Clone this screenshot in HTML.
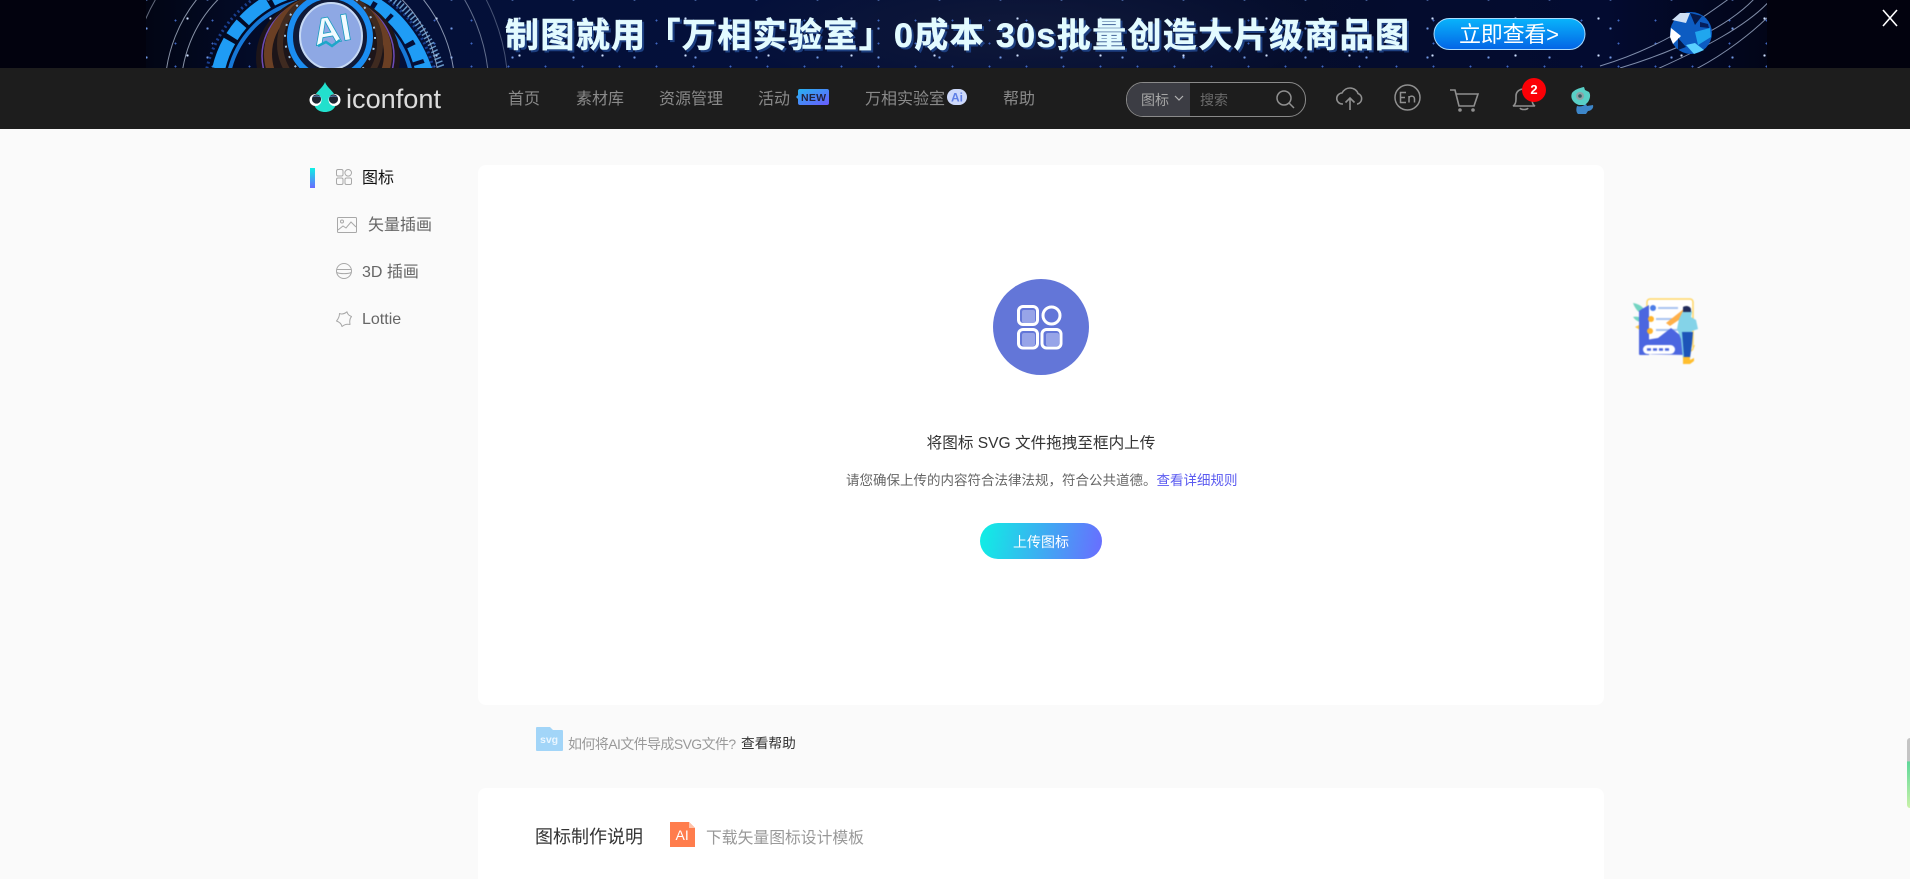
<!DOCTYPE html>
<html lang="zh-CN">
<head>
<meta charset="utf-8">
<title>iconfont</title>
<style>
html,body{margin:0;padding:0;width:1910px;height:879px;overflow:hidden;background:#fafafa}
body{position:relative;font-family:"Liberation Sans","Noto Sans CJK SC",sans-serif}
.a{position:absolute;white-space:nowrap;line-height:1}
.nav{color:#8a8a8a;font-size:16px;top:92px}
svg{position:absolute;overflow:visible}
#banner{position:absolute;left:0;top:0;width:1910px;height:68px;background:#02020e;overflow:hidden}
#art{position:absolute;left:146px;top:0;width:1621px;height:68px;overflow:hidden;
background:
radial-gradient(circle,#cfe0ff 0 1px,transparent 1.3px) 0 0/83px 37px,
radial-gradient(circle,#6f95e0 0 1px,transparent 1.3px) 31px 14px/61px 29px,
radial-gradient(circle,#3f66c0 0 .8px,transparent 1.1px) 11px 9px/37px 23px,
radial-gradient(ellipse 300px 70px at 880px 30px,#10193a 0,transparent 100%),
linear-gradient(90deg,#020514 0,#041038 12%,#04103a 40%,#050d2c 70%,#030b30 90%,#020518 100%)}
</style>
</head>
<body>
<div id="banner">
  <div id="art"></div>
  <svg style="left:0;top:0" width="1910" height="68" viewBox="0 0 1910 68">
    <defs>
      <clipPath id="ac"><rect x="146" y="0" width="1621" height="68"/></clipPath>
      <linearGradient id="bb" x1="0" y1="0" x2="0" y2="1"><stop offset="0" stop-color="#09b4fb"/><stop offset="1" stop-color="#0364e6"/></linearGradient>
    </defs>
    <g clip-path="url(#ac)">
    <g fill="none" stroke="#c2cee2">
      <circle cx="310" cy="90" r="129" opacity=".7"/>
      <circle cx="310" cy="90" r="145" opacity=".7"/>
      <circle cx="310" cy="90" r="179" opacity=".5"/>
      <circle cx="310" cy="90" r="198" opacity=".35"/>
    </g>
    <g fill="none">
      <circle cx="320" cy="94" r="116" stroke="#1a3f8f" stroke-width="3" stroke-dasharray="2 3"/>
      <circle cx="320" cy="92" r="104" stroke="#1f9cf5" stroke-width="13" stroke-dasharray="16 4 30 5"/>
      <circle cx="320" cy="92" r="93" stroke="#1678d8" stroke-width="4"/>
      <ellipse cx="328" cy="58" rx="72" ry="64" fill="#1d1519"/>
      <ellipse cx="328" cy="56" rx="66" ry="60" stroke="#6d4bb8" stroke-width="1.500"/>
      <ellipse cx="328" cy="54" rx="60" ry="56" stroke="#6b3f24" stroke-width="8"/>
      <ellipse cx="330" cy="44" rx="50" ry="50" stroke="#3f2a20" stroke-width="6"/>
      <ellipse cx="330" cy="37" rx="40" ry="41" stroke="#1b8df2" stroke-width="6" fill="#101a38"/>
      <ellipse cx="330" cy="37" rx="45" ry="46" stroke="#9fc6e8" stroke-width="2" stroke-dasharray="2 9"/>
      <ellipse cx="331" cy="36" rx="31" ry="33" fill="#8ea8e4" stroke="#c6d9f5" stroke-width="2"/>
      <path d="M373-2C400 12 420 40 430 70" stroke="#1f9cf5" stroke-width="5"/>
      <path d="M392-2C415 15 432 40 442 70" stroke="#7fb6e6" stroke-width="7" stroke-dasharray="1.500 2.500" opacity=".8"/>
    </g>
    <text x="313" y="43" font-family="Liberation Sans" font-size="38" font-weight="700" fill="#f2fbff" stroke="#1a9cc0" stroke-width=".8" transform="rotate(-10 330 30)">AI</text>
    <path d="M318 46l8-4 6 4 8-6" fill="none" stroke="#1da7c9" stroke-width="2.500"/>
    <g fill="none" stroke="#b4c5e2" stroke-width="1" opacity=".7">
      <path d="M1600 66C1660 48 1700 20 1730-2"/>
      <path d="M1620 68C1680 50 1730 25 1755-2"/>
      <path d="M1655 70C1700 50 1750 25 1772-2"/>
      <path d="M1690 72C1725 55 1755 30 1770 15"/>
    </g>
    <g>
      <circle cx="1691" cy="33" r="21" fill="#0d5cc2"/>
      <path d="M1672 20l8-7 10 0-4 10z" fill="#cfe0f5"/>
      <path d="M1671 28l10 8-8 8-3-7z" fill="#fff"/>
      <path d="M1690 13l12 3-7 9z" fill="#06194a"/>
      <path d="M1695 32l15-4 1 9-13 8z" fill="#20a6ee"/>
      <path d="M1686 45l8 9 10-4-9-7z" fill="#5ad0ff"/>
      <path d="M1678 38l8 9-8 3z" fill="#041a4c"/>
      <path d="M1700 22l8 2 1 4-9-1z" fill="#061f5c"/>
    </g>
    </g>
    <text x="505" y="47" font-family="Liberation Sans,Noto Sans CJK SC,sans-serif" font-size="34" font-weight="700" fill="#1d3f80" stroke="#1d3f80" stroke-width=".6" textLength="904" lengthAdjust="spacing" transform="translate(2 2)">制图就用「万相实验室」0成本 30s批量创造大片级商品图</text>
    <text x="505" y="47" font-family="Liberation Sans,Noto Sans CJK SC,sans-serif" font-size="34" font-weight="700" fill="#e3fbff" stroke="#e3fbff" stroke-width=".5" textLength="904" lengthAdjust="spacing">制图就用「万相实验室」0成本 30s批量创造大片级商品图</text>
    <rect x="1434" y="18.500" width="151" height="31" rx="15.500" fill="url(#bb)" stroke="#a9dcff" stroke-width="1"/>
    <text x="1459" y="42" font-family="Liberation Sans,Noto Sans CJK SC,sans-serif" font-size="22" fill="#fff" textLength="100" lengthAdjust="spacing">立即查看&gt;</text>
    <path d="M1883 10l14 16M1897 10l-14 16" stroke="#fff" stroke-width="1.600" fill="none"/>
  </svg>
</div>

<div class="a" style="left:0;top:68px;width:1910px;height:61px;background:#1d1d1d"></div>

<!-- logo -->
<svg style="left:309px;top:82px" width="32" height="31" viewBox="0 0 32 31">
  <path d="M16 0C18 6 25 9 27 16C29 25 23 30 16 30C9 30 3 25 5 16C7 9 14 6 16 0Z" fill="#22e0cd"/>
  <circle cx="6.500" cy="18" r="6" fill="#fff"/><circle cx="25.500" cy="18" r="6" fill="#fff"/>
  <circle cx="7.500" cy="17" r="4.600" fill="#1d2430"/><circle cx="24.500" cy="17" r="4.600" fill="#1d2430"/>
  <path d="M13.500 16c-3-3-8-3-10-1 3-1 7-1 10 1zM18.500 16c3-3 8-3 10-1-3-1-7-1-10 1z" fill="#7fb8ff"/>
</svg>
<svg style="left:346px;top:84px" width="100" height="30"><text x="0" y="24" font-family="Liberation Sans" font-size="27" fill="#dcdcdc" textLength="95" lengthAdjust="spacingAndGlyphs">iconfont</text></svg>

<div class="a nav" style="left:508px">首页</div>
<div class="a nav" style="left:576px">素材库</div>
<div class="a nav" style="left:659px">资源管理</div>
<div class="a nav" style="left:758px">活动</div>
<svg style="left:796px;top:89px" width="34" height="17" viewBox="0 0 34 17">
  <defs><linearGradient id="nw" x1="0" y1="0" x2="1" y2="1"><stop offset="0" stop-color="#25b5f0"/><stop offset="1" stop-color="#6a5cff"/></linearGradient></defs>
  <path d="M4 0h27a2 2 0 0 1 2 2v12a2 2 0 0 1-2 2H4a2 2 0 0 1-2-2v-4L0 8l2-2V2a2 2 0 0 1 2-2z" fill="url(#nw)"/>
  <text x="5" y="12" font-family="Liberation Sans" font-size="10.500" font-weight="700" fill="#23233f" textLength="25">NEW</text>
</svg>
<div class="a nav" style="left:865px">万相实验室</div>
<svg style="left:947px;top:89px" width="20" height="16" viewBox="0 0 20 16">
  <rect width="20" height="16" rx="8" fill="#cdd9fb"/>
  <text x="4" y="12.500" font-family="Liberation Sans" font-size="12" font-weight="700" fill="#5f7fe6">Ai</text>
</svg>
<div class="a nav" style="left:1003px">帮助</div>

<!-- search -->
<div class="a" style="left:1126px;top:82px;width:178px;height:33px;border:1px solid #8a8a8a;border-radius:17px;overflow:hidden">
  <div class="a" style="left:0;top:0;width:63px;height:33px;background:#3c3d44"></div>
</div>
<div class="a" style="left:1141px;top:93px;font-size:14px;color:#a6a6a6">图标</div>
<svg style="left:1174px;top:95px" width="10" height="7"><path d="M1 1l4 4 4-4" fill="none" stroke="#b4b4b4" stroke-width="1.200"/></svg>
<div class="a" style="left:1200px;top:93px;font-size:14px;color:#6b6b6b">搜索</div>
<svg style="left:1276px;top:90px" width="19" height="18" viewBox="0 0 19 18"><circle cx="8" cy="8" r="7" fill="none" stroke="#909090" stroke-width="1.500"/><path d="M13 13l5 5" stroke="#909090" stroke-width="1.500"/></svg>

<!-- nav icons -->
<svg style="left:1336px;top:87px" width="28" height="24" viewBox="0 0 28 24" fill="none" stroke="#8f8f8f" stroke-width="1.600">
  <path d="M7 17H6.500a5.500 5.500 0 0 1-.5-11C8 2.500 11 1 14 1c4 0 7 2.500 8 5.500a5.500 5.500 0 0 1-.5 10.500H21"/>
  <path d="M14 23V11M9.500 15.500L14 11l4.500 4.500"/>
</svg>
<svg style="left:1394px;top:84px" width="27" height="27" viewBox="0 0 27 27" fill="none" stroke="#8f8f8f" stroke-width="1.500">
  <circle cx="13.500" cy="13.500" r="12.500"/>
  <path d="M12 8.500H6.500v10H12M6.500 13.500H11M15 18.500V12M15 14.500c0-3 5.500-3.500 5.500.5v3.500"/>
</svg>
<svg style="left:1450px;top:89px" width="30" height="23" viewBox="0 0 30 23" fill="none" stroke="#8f8f8f" stroke-width="1.600">
  <path d="M0 1h5l4 16h15l4-12H6"/>
  <circle cx="10" cy="21" r="1" fill="#8f8f8f"/><circle cx="23" cy="21" r="1" fill="#8f8f8f"/>
</svg>
<svg style="left:1512px;top:87px" width="24" height="24" viewBox="0 0 24 24" fill="none" stroke="#8f8f8f" stroke-width="1.600">
  <path d="M1 19c2-1 3-3 3-7V9c0-4 3-7 8-7s8 3 8 7v3c0 4 1 6 3 7z"/>
  <path d="M8 21c1 2 7 2 8 0"/>
</svg>
<div class="a" style="left:1522px;top:78px;width:24px;height:24px;border-radius:12px;background:#fb0006;color:#fff;font-size:13px;line-height:24px;text-align:center;font-weight:700">2</div>
<svg style="left:1570px;top:87px" width="24" height="27" viewBox="0 0 24 27">
  <path d="M14 0l1 3 4 2c2 3 1 7-1 10l-3 3H9C3 16 0 11 2 6c2-3 7-5 12-6z" fill="#59cfc6"/>
  <circle cx="10" cy="9" r="4" fill="#8ea2a6"/><circle cx="10" cy="9" r="1.800" fill="#2e5c60"/>
  <path d="M7 19c3 1 7 0 9-2l1 2 6-1c1 3-2 6-5 6l-2 3H8c-2-2-2-5-1-8z" fill="#3d86c9"/>
</svg>

<!-- sidebar -->
<div class="a" style="left:310px;top:168px;width:5px;height:20px;background:linear-gradient(180deg,#0ff0e4,#6a6aff)"></div>
<svg style="left:336px;top:169px" width="16" height="16" viewBox="0 0 16 16" fill="none" stroke="#a8a8a8" stroke-width="1">
  <rect x=".5" y=".5" width="6.500" height="6.500" rx="1.500"/><circle cx="12.200" cy="3.800" r="3.300"/>
  <rect x=".5" y="9" width="6.500" height="6.500" rx="1.500"/><rect x="9" y="9" width="6.500" height="6.500" rx="1.500"/>
</svg>
<div class="a" style="left:362px;top:171px;font-size:16px;color:#111">图标</div>
<svg style="left:337px;top:217px" width="20" height="16" viewBox="0 0 20 16" fill="none" stroke="#a8a8a8" stroke-width="1">
  <rect x=".5" y=".5" width="19" height="15" rx="1"/><circle cx="5" cy="4.500" r="1.500"/>
  <path d="M1 13l5-4 3 2 5-6 5 5"/>
</svg>
<div class="a" style="left:368px;top:218px;font-size:16px;color:#666">矢量插画</div>
<svg style="left:336px;top:263px" width="16" height="16" viewBox="0 0 16 16" fill="none" stroke="#a8a8a8" stroke-width="1">
  <circle cx="8" cy="8" r="7.500"/><path d="M.5 6.500h15M.5 9.500c4 1.500 11 1.500 15 0"/>
</svg>
<div class="a" style="left:362px;top:265px;font-size:16px;color:#666">3D 插画</div>
<svg style="left:336px;top:311px" width="16" height="16" viewBox="0 0 16 16" fill="none" stroke="#a8a8a8" stroke-width="1" stroke-linejoin="round">
  <path d="M3.500 2.500Q7 4 11 .8Q11.500 4 15.500 5.500Q13 8.500 14 13.500Q9.500 12.500 6 15.500Q5 11.500 .5 10Q3.500 6.500 3.500 2.500Z"/>
</svg>
<div class="a" style="left:362px;top:312px;font-size:16px;color:#666">Lottie</div>

<!-- main panel -->
<div class="a" style="left:478px;top:165px;width:1126px;height:540px;background:#fff;border-radius:8px"></div>
<svg style="left:993px;top:279px" width="96" height="96" viewBox="0 0 96 96">
  <circle cx="48" cy="48" r="48" fill="#6376d8"/>
  <g fill="#97a4e8"><rect x="29" y="31" width="13" height="13" rx="2"/><rect x="29" y="54" width="13" height="13" rx="2"/><rect x="53" y="54" width="13" height="13" rx="2"/></g>
  <g fill="none" stroke="#fff" stroke-width="3">
    <rect x="25.500" y="27.500" width="19" height="18" rx="4.500"/><circle cx="58.500" cy="36.500" r="8.500"/>
    <rect x="25.500" y="50.500" width="19" height="18.500" rx="4.500"/><rect x="49" y="50.500" width="19" height="18.500" rx="4.500"/>
  </g>
</svg>
<div class="a" style="left:920px;top:436px;font-size:15.600px;color:#333;width:242px;text-align:center">将图标 SVG 文件拖拽至框内上传</div>
<div class="a" style="left:846px;top:474px;font-size:13.500px;color:#666">请您确保上传的内容符合法律法规，符合公共道德。<span style="color:#5b5bf0">查看详细规则</span></div>
<div class="a" style="left:980px;top:523px;width:122px;height:36px;border-radius:18px;background:linear-gradient(100deg,#0ef0e4,#6a6cff);color:#fff;font-size:14px;line-height:38px;text-align:center">上传图标</div>

<!-- help row -->
<svg style="left:536px;top:727px" width="27" height="24" viewBox="0 0 27 24">
  <path d="M0 1a1 1 0 0 1 1-1h13l3 3h9a1 1 0 0 1 1 1v19a1 1 0 0 1-1 1H1a1 1 0 0 1-1-1z" fill="#a2d5f8"/>
  <text x="4" y="16" font-family="Liberation Sans" font-size="10.500" font-weight="700" fill="#eaf6ff">svg</text>
</svg>
<div class="a" style="left:568px;top:737px;font-size:14px;color:#999;letter-spacing:-.6px">如何将AI文件导成SVG文件?</div>
<div class="a" style="left:741px;top:737px;font-size:13.700px;color:#333">查看帮助</div>

<!-- second panel -->
<div class="a" style="left:478px;top:788px;width:1126px;height:120px;background:#fff;border-radius:8px 8px 0 0"></div>
<div class="a" style="left:535px;top:828px;font-size:18px;color:#333">图标制作说明</div>
<svg style="left:670px;top:822px" width="25" height="25" viewBox="0 0 25 25">
  <path d="M0 0h19l6 6v19H0z" fill="#ff7d4d"/><path d="M19 0l6 6h-6z" fill="#ffc3aa"/>
  <text x="5.500" y="18" font-family="Liberation Sans" font-size="14" fill="#fff">AI</text>
</svg>
<div class="a" style="left:706px;top:831px;font-size:15.800px;color:#999">下载矢量图标设计模板</div>

<!-- floating illustration -->
<svg style="left:1633px;top:297px;filter:blur(.5px)" width="68" height="68" viewBox="0 0 68 68">
  <path d="M0 6c7 1 12 5 14 12-6 0-11-4-14-12zM0 20c4-1 9 0 12 5-5 1-9-1-12-5z" fill="#73d4c2"/>
  <path d="M2 30l6-3-1 6zM57 50l5-2-2 5z" fill="#ffcb4a"/>
  <rect x="14" y="2" width="46" height="52" rx="3" fill="#fff" stroke="#ffd666" stroke-width="1.500"/>
  <path d="M9 12l7-4v50H7a1 1 0 0 1-1-1V14z" fill="#4b66e0"/>
  <circle cx="20" cy="11" r="3" fill="#4b7de8"/><circle cx="18" cy="22" r="3" fill="#ffb52e"/><circle cx="17" cy="34" r="3" fill="#ffb52e"/>
  <path d="M25 11h20M23 22h18M23 33h28" stroke="#a9c4f0" stroke-width="2"/>
  <path d="M33 26L52 11l4 5-19 13z" fill="#ffb04a"/>
  <path d="M7 57V44l18-3 13-10 14 11v16z" fill="#4b66e0"/>
  <rect x="10" y="48" width="32" height="9" rx="4.500" fill="#fff"/>
  <path d="M14 52.500h24" stroke="#4b66e0" stroke-width="2.500" stroke-dasharray="4 2"/>
  <path d="M50 14c3-3 8-2 9 1l-1 5 5 3 2 9-6 2-1 10-2 18h-6l-2-20-4-10 2-10z" fill="#84d3e8"/>
  <path d="M49 35h11l-1 12-2 14h-6z" fill="#1d54b8"/>
  <path d="M50 10c3-2 7-1 8 2v3h-8z" fill="#222c5a"/>
  <path d="M50 60h7v3l4-2 0 3-4 3h-7z" fill="#ffbe2e"/>
</svg>

<!-- right edge tab -->
<div class="a" style="left:1907px;top:738px;width:3px;height:70px;border-radius:3px 0 0 3px;background:linear-gradient(180deg,#c4c4c4 0,#c4c4c4 33%,#5fd89a 34%,#c9f1a8 100%)"></div>
</body>
</html>
